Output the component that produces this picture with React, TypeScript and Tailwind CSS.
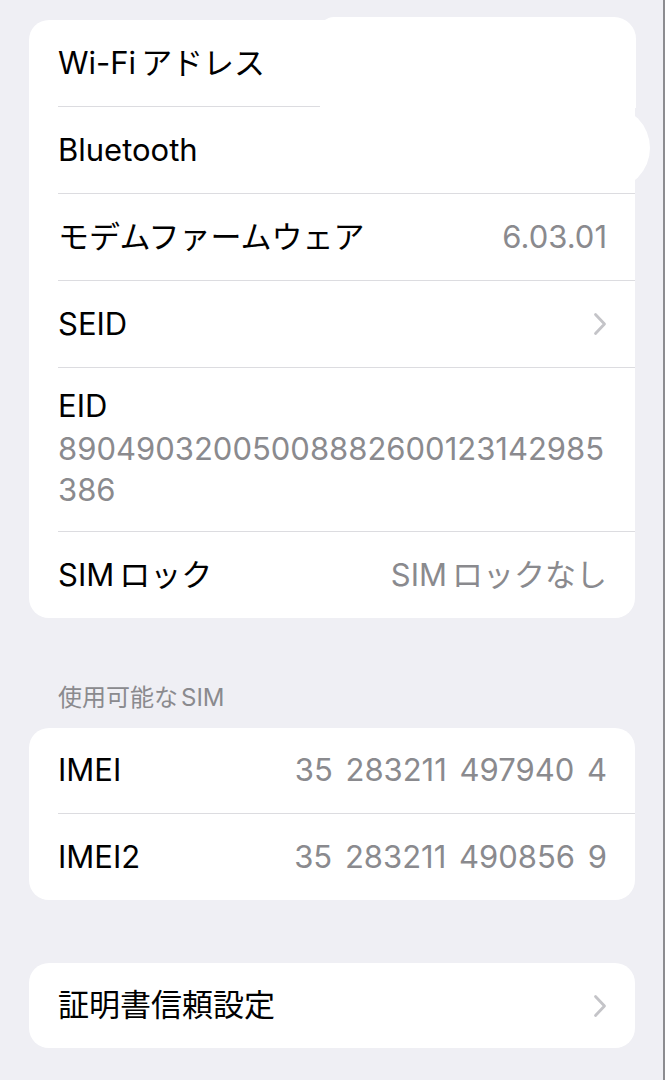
import React from "react";

const font = "font-['Inter','Noto_Sans_CJK_JP',sans-serif]";

function Chevron() {
  return (
    <svg width="14" height="24" viewBox="0 0 14 24" fill="none">
      <path d="M2.5 2.5 L11.5 12 L2.5 21.5" stroke="#c4c4c8" strokeWidth="2.8" strokeLinecap="round" strokeLinejoin="round" />
    </svg>
  );
}

// Latin run followed by a kana run, with the small gap iOS puts between them
function Mixed({ latin, kana }: { latin: string; kana: string }) {
  return (
    <>
      {latin}
      <span className="ml-[5px]">{kana}</span>
    </>
  );
}

function Row({
  label,
  value,
  chevron,
  last,
  h = "h-[87px]",
  valueClass = "",
}: {
  label: React.ReactNode;
  value?: React.ReactNode;
  chevron?: boolean;
  last?: boolean;
  h?: string;
  valueClass?: string;
}) {
  return (
    <div className="pl-[29px]">
      <div
        className={`flex items-center justify-between pr-[28px] ${h} ${
          last ? "" : "border-b border-[#dcdce0]"
        }`}
      >
        <span className="text-[31px] text-black whitespace-nowrap">{label}</span>
        {value && (
          <span className={`text-[31px] text-[#8a8a8e] whitespace-nowrap ${valueClass}`}>{value}</span>
        )}
        {chevron && <Chevron />}
      </div>
    </div>
  );
}

export default function App() {
  return (
    <div className={`relative w-[665px] h-[1080px] overflow-hidden bg-[#efeff4] border-r-2 border-[#8c8c90] pt-5 pl-[29px] pr-[28px] ${font}`}>
      <div className="rounded-[20px] bg-white">
        <Row label={<Mixed latin="Wi-Fi" kana="アドレス" />} />
        <Row label="Bluetooth" />
        <Row label="モデムファームウェア" value="6.03.01" />
        <Row label="SEID" chevron />
        <div className="pl-[29px]">
          <div className="h-[164px] pt-4 pr-[28px] border-b border-[#dcdce0]">
            <div className="text-[31px] leading-[44px] text-black">EID</div>
            <div className="text-[31px] leading-[41px] text-[#8a8a8e] whitespace-nowrap">
              89049032005008882600123142985
              <br />
              386
            </div>
          </div>
        </div>
        <Row
          label={<Mixed latin="SIM" kana="ロック" />}
          value={<Mixed latin="SIM" kana="ロックなし" />}
          last
          h="h-[86px]"
        />
      </div>

      <div className="mt-[65px] mb-[15px] pl-[29px] text-[24px] leading-[30px] text-[#8a8a8e]">
        使用可能な<span className="ml-[3px]">SIM</span>
      </div>

      <div className="rounded-[20px] bg-white">
        <Row label="IMEI" value="35 283211 497940 4" valueClass="[word-spacing:4px]" h="h-[86px]" />
        <Row label="IMEI2" value="35 283211 490856 9" valueClass="[word-spacing:4px]" last h="h-[86px]" />
      </div>

      <div className="mt-[63px] rounded-[20px] bg-white">
        <Row label="証明書信頼設定" chevron last h="h-[85px]" />
      </div>

      {/* redaction blobs over the address values */}
      <div className="absolute left-[320px] top-[17px] w-[316px] h-[91px] bg-white rounded-tl-[14px] rounded-tr-[22px]" />
      <div className="absolute left-[321px] top-[106px] w-[329px] h-[84px] bg-white rounded-r-[42px]" />
    </div>
  );
}
